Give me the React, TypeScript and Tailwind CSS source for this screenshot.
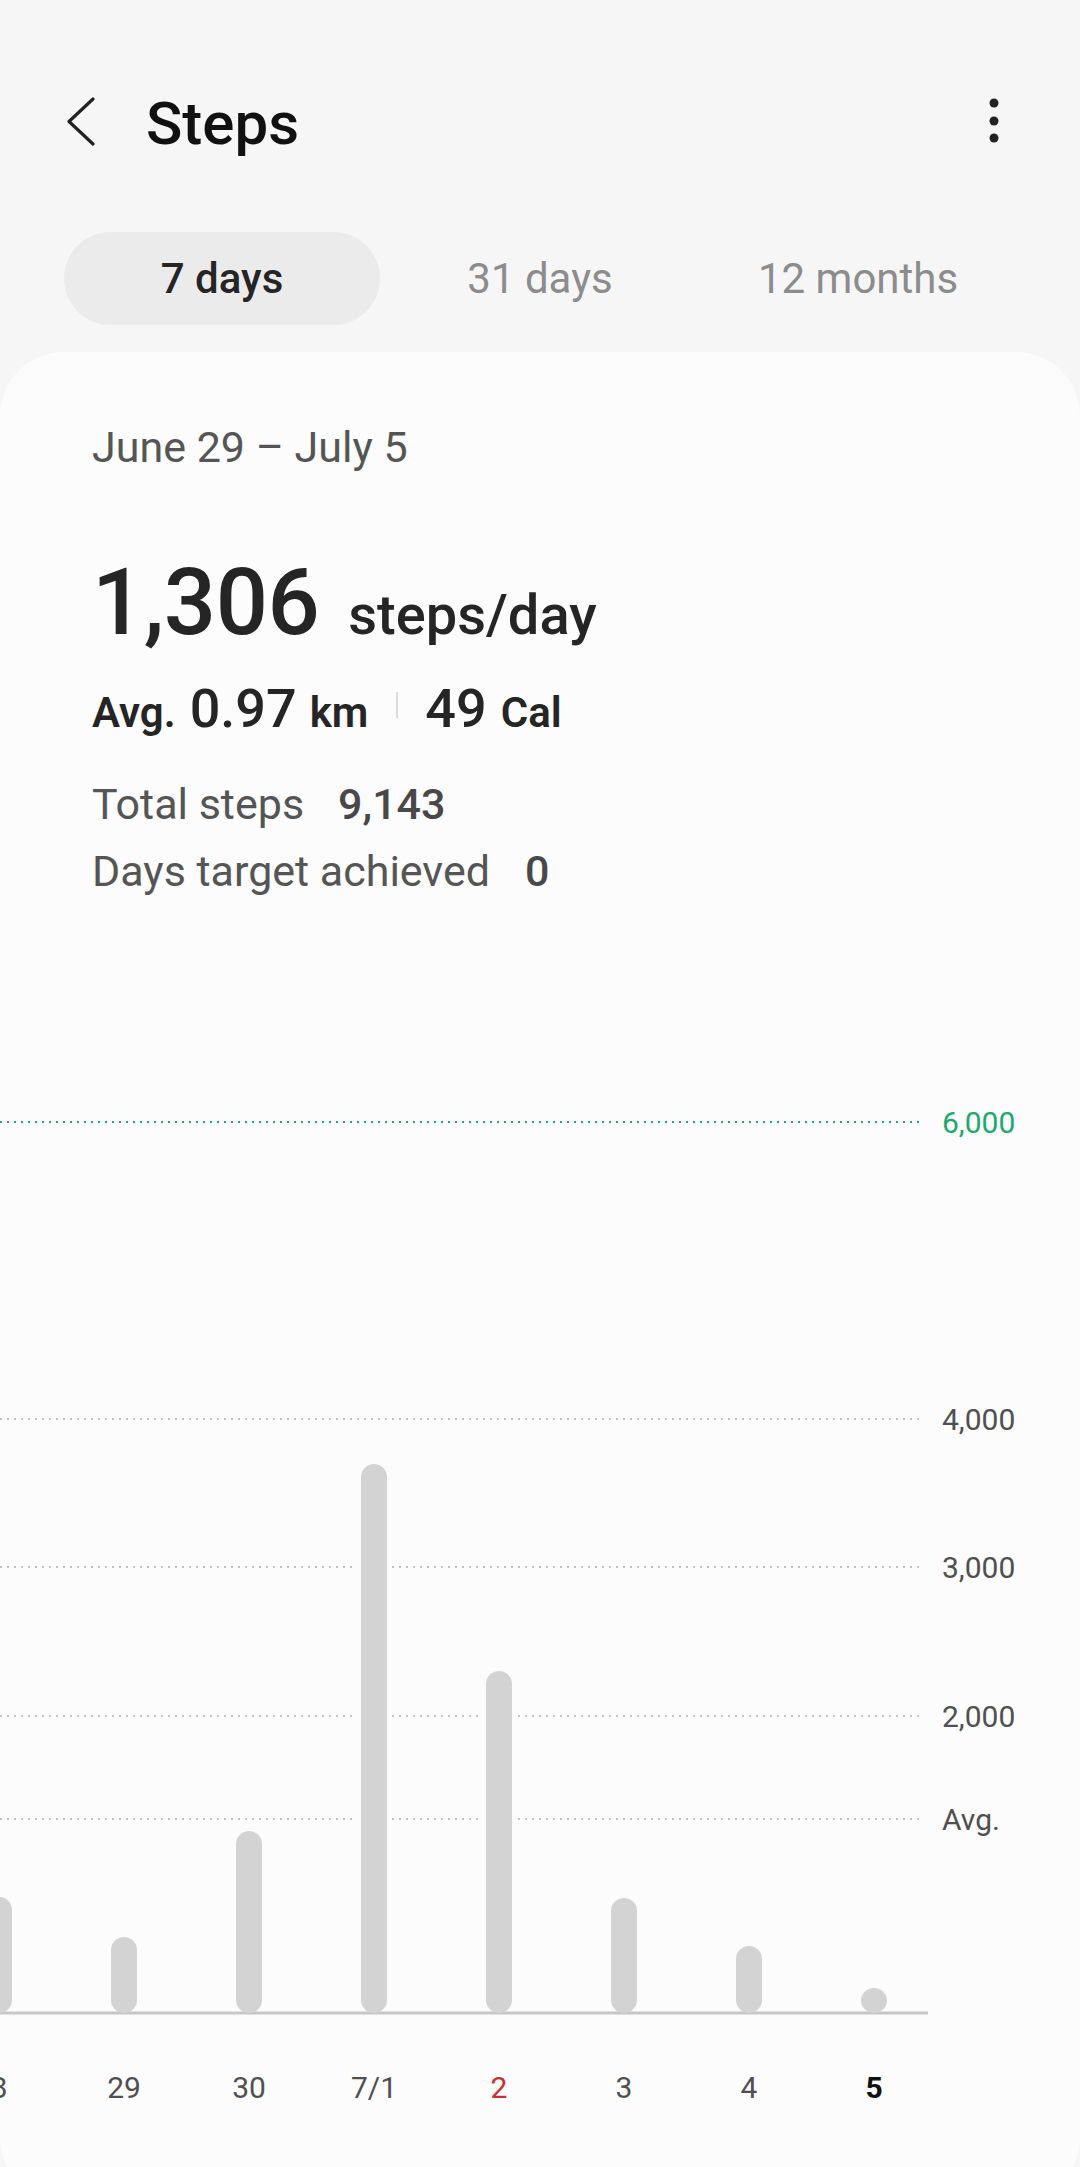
import React from "react";

const days = [
  { label: "8", value: 781 },
  { label: "29", value: 512 },
  { label: "30", value: 1226 },
  { label: "7/1", value: 3697 },
  { label: "2", value: 2303, color: "#c8312f" },
  { label: "3", value: 774 },
  { label: "4", value: 451 },
  { label: "5", value: 168, color: "#111111", bold: true },
];

const BASE = 2013;
const PER = 0.1485;

const gridLines = [
  { y: 1122, label: "6,000", green: true },
  { y: 1419, label: "4,000" },
  { y: 1567, label: "3,000" },
  { y: 1716, label: "2,000" },
  { y: 1819, label: "Avg." },
];

function StepsChart() {
  return (
    <svg
      width={1080}
      height={1030}
      viewBox="0 1090 1080 1030"
      className="block"
      style={{ fontFamily: "Roboto, 'Liberation Sans', sans-serif" }}
    >
      {gridLines.map((g) => (
        <g key={g.label}>
          <line
            x1={0}
            x2={924}
            y1={g.y}
            y2={g.y}
            stroke={g.green ? "#1aaa6e" : "#c2c2c2"}
            strokeWidth={2}
            strokeDasharray="2 5"
          />
          <text
            x={942}
            y={g.y + 11}
            fontSize={30}
            fill={g.green ? "#1aaa6e" : "#505050"}
          >
            {g.label}
          </text>
        </g>
      ))}

      {/* halo behind bars so the dotted lines break around them */}
      {days.map((d, i) => {
        const cx = -1 + 125 * i;
        const top = BASE - d.value * PER;
        return (
          <rect
            key={"h" + i}
            x={cx - 17}
            y={top - 4}
            width={34}
            height={BASE - top - 6}
            rx={17}
            fill="#fcfcfc"
          />
        );
      })}

      <line x1={0} x2={928} y1={BASE} y2={BASE} stroke="#c6c6c6" strokeWidth={3} />

      {days.map((d, i) => {
        const cx = -1 + 125 * i;
        const top = BASE - d.value * PER;
        return (
          <rect
            key={"b" + i}
            x={cx - 13}
            y={top}
            width={26}
            height={BASE - top}
            rx={13}
            fill="#d3d3d3"
          />
        );
      })}

      {days.map((d, i) => (
        <text
          key={"l" + i}
          x={-1 + 125 * i}
          y={2098}
          textAnchor="middle"
          fontSize={30}
          fontWeight={d.bold ? 700 : 400}
          fill={d.color ?? "#505050"}
        >
          {d.label}
        </text>
      ))}
    </svg>
  );
}

export default function App() {
  const tabs = ["7 days", "31 days", "12 months"];

  return (
    <div
      className="h-[2167px] w-[1080px] overflow-hidden bg-[#f6f6f6] text-[#252525]"
      style={{ fontFamily: "Roboto, 'Liberation Sans', sans-serif" }}
    >
      {/* header */}
      <div className="mt-[76px] flex h-[96px] items-center pl-[66px] pr-[76px]">
        <svg width={30} height={50} viewBox="0 0 30 50" className="-translate-y-[2px]">
          <path
            d="M27 2 L3 24.5 L27 47"
            fill="none"
            stroke="#222"
            strokeWidth={3.2}
            strokeLinecap="round"
            strokeLinejoin="round"
          />
        </svg>
        <h1 className="ml-[50px] text-[60px] leading-[60px] font-medium text-[#111]">Steps</h1>
        <div className="flex-1" />
        <svg width={20} height={50} viewBox="0 0 20 50" className="-translate-y-[3px]">
          <circle cx={10} cy={7} r={4.5} fill="#222" />
          <circle cx={10} cy={25} r={4.5} fill="#222" />
          <circle cx={10} cy={42} r={4.5} fill="#222" />
        </svg>
      </div>

      {/* period tabs */}
      <div className="mt-[60px] flex px-[63px]">
        {tabs.map((t, i) => (
          <div
            key={t}
            className={
              i === 0
                ? "mx-[1px] flex h-[93px] flex-1 items-center justify-center rounded-full bg-[#ebebeb] text-[42px] font-medium text-[#252525]"
                : "mx-[1px] flex h-[93px] flex-1 items-center justify-center rounded-full text-[42px] text-[#8c8c8c]"
            }
          >
            {t}
          </div>
        ))}
      </div>

      {/* card */}
      <div className="mt-[27px] h-[1850px] rounded-[64px] bg-[#fcfcfc] pt-[69px]">
        <div className="pl-[92px]">
          <div className="text-[43px] leading-[52px] text-[#555]">June 29 – July 5</div>

          <div className="mt-[80px] flex items-baseline leading-[100px]">
            <span className="text-[92px] font-medium tracking-[-0.5px] text-[#252525]">1,306</span>
            <span className="ml-[29px] text-[56px] font-medium text-[#252525]">steps/day</span>
          </div>

          <div className="mt-[12px] flex items-baseline leading-[64px] text-[#252525]">
            <span className="text-[42px] font-semibold">Avg.</span>
            <span className="ml-[14px] text-[54px] font-medium">0.97</span>
            <span className="ml-[13px] text-[42px] font-semibold">km</span>
            <span className="ml-[28px] inline-block h-[26px] w-[2px] -translate-y-[9px] bg-[#dcdcdc]" />
            <span className="ml-[27px] text-[54px] font-medium">49</span>
            <span className="ml-[14px] text-[42px] font-semibold">Cal</span>
          </div>

          <div className="mt-[26px] text-[43px] leading-[67px] text-[#555]">
            <div className="flex">
              <span>Total steps</span>
              <span className="ml-[34px] font-medium text-[#484848]">9,143</span>
            </div>
            <div className="flex">
              <span>Days target achieved</span>
              <span className="ml-[35px] font-medium text-[#484848]">0</span>
            </div>
          </div>
        </div>

        <div className="mt-[185px]">
          <StepsChart />
        </div>
      </div>
    </div>
  );
}
